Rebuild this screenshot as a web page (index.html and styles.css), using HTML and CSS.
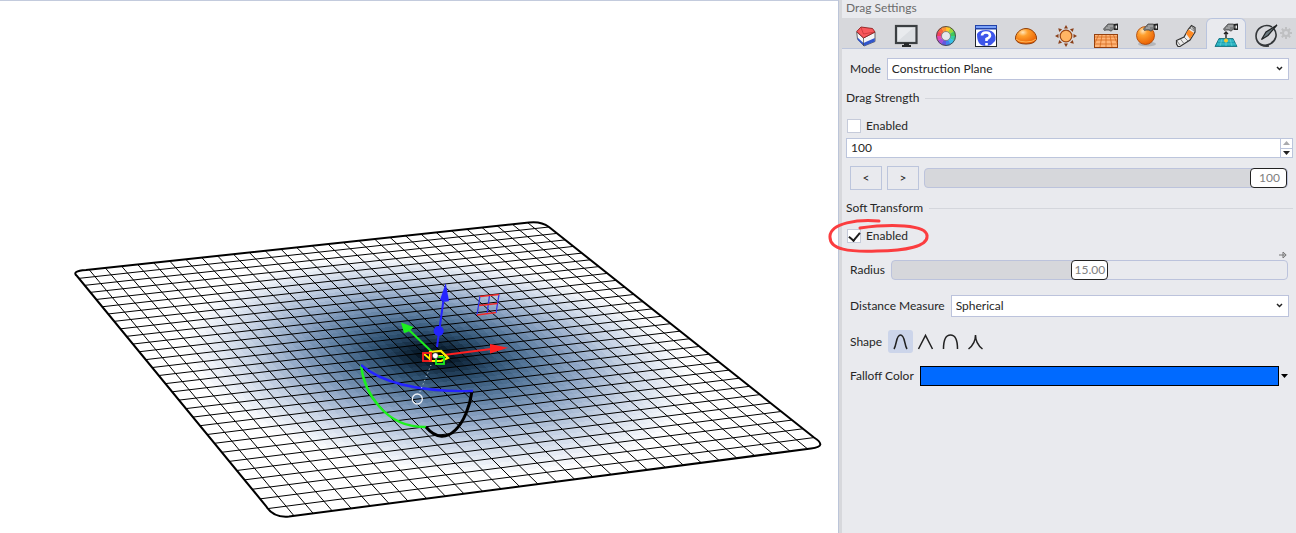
FILE: index.html
```html
<!DOCTYPE html>
<html lang="en">
<head>
<meta charset="utf-8">
<title>Drag Settings</title>
<link rel="stylesheet" href="styles.css">
</head>
<body>
<svg class="symbols" aria-hidden="true">
  <symbol id="hand" viewBox="0 0 15 9">
    <path d="M.5 6 5 1h5l1 .5v4L8 8.200 6 7H3L1.500 7.500z" fill="#7f8183" stroke="#4a4a4a" stroke-width=".8"/>
    <path d="M5 3h5M3 5h4" stroke="#bbb" fill="none"/>
    <path d="M10.500 1 15 .500V7H10.500L11.500 4z" fill="#222"/><path d="M12.500 2.500h1.500v3h-1.500z" fill="#e9e9e9"/>
  </symbol>
</svg>
<main class="app">
  <section class="viewport" aria-label="Perspective view">
    <svg class="scene" viewBox="0 0 838 533">
      <defs>
        <clipPath id="plane-clip"><path d="M86 270 529 222.500Q541 221 549 227L814 437.500Q828 446.500 811 448.500L289 516.500Q273 518 266 506L77 276Q71 271 86 270Z"/></clipPath>
      </defs>
      <g clip-path="url(#plane-clip)">
        <g id="cells" shape-rendering="crispEdges"></g>
        <path id="wires" class="wires"/>
      </g>
      <path class="outline" d="M86 270 529 222.500Q541 221 549 227L814 437.500Q828 446.500 811 448.500L289 516.500Q273 518 266 506L77 276Q71 271 86 270Z"/>
      <g fill="none" stroke-width="2.400">
        <path d="M361 365C364 392 385 428 426 427" stroke="#1df01d"/>
        <path d="M472 391C468 422 447 452 426 427" stroke="#000" stroke-width="3"/>
        <path d="M361 365C382 383 420 392 473 391" stroke="#2424ff"/>
      </g>
      <path d="M431 365 419 394" stroke="#dfe6ef" stroke-dasharray="1 3"/>
      <circle cx="417.300" cy="399" r="5" fill="none" stroke="#eef2f8" stroke-width="1.300"/>
      <g fill="none">
        <path d="M480 296 477 315M489.500 295.500 487 314M499 294.500 496 313" stroke="#3434e8" stroke-width="1.300"/>
        <path d="M480 296.500 499 294.500M479 305.500 497.500 303.500M477 315 496 312.500" stroke="#f02a2a" stroke-width="1.300"/>
      </g>
      <path d="M437 347 443.500 300" stroke="#2424ff" stroke-width="2"/>
      <path d="M445.700 283 440 300Q444 303 449 301Z" fill="#2424ff"/><circle cx="438.700" cy="331" r="5" fill="#2424ff"/>
      <path d="M432 352 408 329" stroke="#1df01d" stroke-width="2"/>
      <path d="M401 322.500 404 333Q410 332 413.500 327Z" fill="#1df01d"/>
      <path d="M444 355 491 349" stroke="#ff2020" stroke-width="2"/>
      <path d="M508 347.700 490 344V353.500Z" fill="#ff2020"/>
      <path d="M430 352 441 351 448 358 441 361H430Z" fill="#050505" stroke="#ffee00" stroke-width="2.200"/>
      <path d="M424 354 430 359M437 356H443" stroke="#ffee00" stroke-width="2"/>
      <rect x="423" y="353" width="8" height="8" fill="none" stroke="#ff2020" stroke-width="1.800"/>
      <rect x="436" y="357" width="8" height="7" fill="none" stroke="#1df01d" stroke-width="1.800"/>
      <circle cx="435.300" cy="355.700" r="3" fill="#fff" stroke="#111" stroke-width=".6"/>
    </svg>
  </section>

  <aside class="panel">
    <h1 class="title">Drag Settings</h1>
    <nav class="tabs" aria-label="Panels">
      <button class="tab" aria-label="Layers"><svg viewBox="0 0 40 30"><path d="M10.700 13 17.500 19 29 13V22.500L18 27 11.500 20Z" fill="#f4f4f6" stroke="#444" stroke-width=".8"/><path d="M11.500 18.500 17.500 24 28.800 19V22.500L18 27 11.800 21Z" fill="#3156cc"/><path d="M10.700 12.500 15 8 26.500 9.500 29 13 17.500 19Z" fill="#f9585c" stroke="#8d1f1f" stroke-width=".9"/><path d="M15 8.500 17.500 15 28.500 13" fill="none" stroke="#b52a2c" stroke-width=".6"/><path d="M17.500 19V27" stroke="#444" stroke-width=".7"/></svg></button>
      <button class="tab" aria-label="Display"><svg viewBox="0 0 40 30"><rect x="10" y="7" width="20.500" height="17" fill="#dcdfe3" stroke="#3b3f42" stroke-width="2.200"/><path d="M12 22 27 9H12Z" fill="#e9ebee"/><path d="M18 24h5v2h2v2h-9v-2h2z" fill="#26292b"/></svg></button>
      <button class="tab" aria-label="Materials"><svg viewBox="0 0 40 30"><g id="wheel" fill="none" stroke-width="5.500"></g><circle cx="20" cy="17" r="9.500" fill="none" stroke="#444" stroke-width=".9"/><circle cx="20" cy="17" r="4.500" fill="#e6e8eb" stroke="#666" stroke-width=".7"/></svg></button>
      <button class="tab" aria-label="Help"><svg viewBox="0 0 40 30"><rect x="9.500" y="6.500" width="21" height="21" fill="#fff" stroke="#20252c"/><rect x="9" y="6" width="22" height="4.500" fill="#2343a8"/><rect x="10" y="7" width="20" height="2" fill="#7ba2f7"/><path d="M11 15Q13 11 20 11t9 5-2 8q-2 3-7 3t-7-3-2-9z" fill="#3d55ea"/><path d="M16 16.500Q16 13.500 20 13.500T24 16.500Q24 18.500 20.500 20V22M20.500 24V26.500" fill="none" stroke="#fff" stroke-width="2.600"/></svg></button>
      <button class="tab" aria-label="Rendering"><svg viewBox="0 0 40 30"><defs><radialGradient id="orange" cx=".35" cy=".25" r=".8"><stop offset="0" stop-color="#ffe5ba"/><stop offset=".3" stop-color="#ffa12f"/><stop offset="1" stop-color="#e85c00"/></radialGradient></defs><path d="M9.500 20C9 15 14 9.500 20 9.500S31 15 30.500 20Q29 25 20 25T9.500 20Z" fill="url(#orange)" stroke="#91400b"/><path d="M10 20Q13 23 20 23T30 20" fill="none" stroke="#ffb557"/></svg></button>
      <button class="tab" aria-label="Sun"><svg viewBox="0 0 40 30"><g fill="#8a3f18"><path id="ray" d="M18 9.500 20 6l2 3.500z"/><use href="#ray" transform="rotate(45 20 17)"/><use href="#ray" transform="rotate(90 20 17)"/><use href="#ray" transform="rotate(135 20 17)"/><use href="#ray" transform="rotate(180 20 17)"/><use href="#ray" transform="rotate(225 20 17)"/><use href="#ray" transform="rotate(270 20 17)"/><use href="#ray" transform="rotate(315 20 17)"/></g><circle cx="20" cy="17" r="5.800" fill="#ffb564" stroke="#9b4715" stroke-width="1.200"/></svg></button>
      <button class="tab" aria-label="Ground plane"><svg viewBox="0 0 40 30"><rect x="8.500" y="15.500" width="23" height="13" fill="#ffb477" stroke="#94400f"/><path d="M9 18h22M9 21h22M9 25h22M20 16v12M16 16 14 28M24 16l2 12M12.500 16 9 24M27.500 16 31 24" stroke="#d4691f" stroke-width=".8"/><use href="#hand" x="17" y="4" width="15" height="9"/></svg></button>
      <button class="tab" aria-label="Texture mapping"><svg viewBox="0 0 40 30"><ellipse cx="21" cy="25" rx="9" ry="2.500" fill="#b4b6ba"/><circle cx="19.500" cy="16.500" r="9" fill="url(#orange)" stroke="#a84305" stroke-width=".8"/><use href="#hand" x="17" y="4" width="15" height="9"/></svg></button>
      <button class="tab" aria-label="Libraries"><svg viewBox="0 0 40 30"><path d="M10.500 21.500 18 18 22.500 10 25.500 6.500 29 8.500V13L24 21 14 27.500H12L10.500 25Z" fill="#ececec" stroke="#333" stroke-width="1.200"/><path d="M20 14.500 22.500 10.500 28 14 24 20Z" fill="#ff8a24"/><path d="M24 9 28 12M18 18l4 4M14.500 20l3 4M11 22l3 4" stroke="#666" stroke-width=".8"/><path d="M25 7.500 28.500 9v3z" fill="#777"/></svg></button>
      <button class="tab tab-active" aria-label="Drag settings" aria-current="page"><svg viewBox="0 0 40 30"><path d="M13 19.500H27L31 27.500H9Z" fill="#1ba5b5" stroke="#0c6977" stroke-width=".8"/><path d="M12 22h16M11 25h19M16 20 14 27M20 20v7M24 20l2 7" stroke="#61d6dc" stroke-width=".7"/><circle cx="20" cy="21.500" r="2" fill="#f7c72c"/><path d="M20 19V14M18 15l2-2 2 2" fill="none" stroke="#222" stroke-width="1.400"/><use href="#hand" x="17" y="4" width="15" height="9"/></svg></button>
      <button class="tab" aria-label="Annotate"><svg viewBox="0 0 40 30"><path d="M26 8C19 4 10 9 10 17s8 11 14 8 8-10 4-15M11 22q4 6 12 5" fill="none" stroke="#34373a" stroke-width="1.600"/><path d="M31 6 20 13 15.500 20.500 22 16.500Z" fill="#6c7a80" stroke="#202325" stroke-width="1.200"/></svg></button>
      <button class="gear" aria-label="Panel options"><svg viewBox="0 0 12 12"><circle cx="6" cy="6" r="3" fill="none" stroke="#bfc0c2" stroke-width="2"/><path d="M6 0v2.500M6 9.500V12M0 6h2.500M9.500 6H12M1.800 1.800l1.700 1.700M8.500 8.500l1.700 1.700M10.200 1.800 8.500 3.500M3.500 8.500l-1.700 1.700" stroke="#bfc0c2" stroke-width="2"/></svg></button>
    </nav>

    <form class="settings">
      <div class="row select-row">
        <label for="mode">Mode</label>
        <span class="select"><select id="mode"><option>Construction Plane</option></select><svg viewBox="0 0 7 5"><path d="M1 1 3.500 3.500 6 1" fill="none" stroke="#222" stroke-width="1.500"/></svg></span>
      </div>

      <h2 class="group">Drag Strength</h2>
      <label class="check"><input type="checkbox">Enabled</label>
      <div class="spin">
        <input type="text" inputmode="numeric" value="100" aria-label="Drag strength">
        <span class="steps">
          <button type="button" aria-label="Increase"><svg viewBox="0 0 7 4"><path d="M0 4 3.500 0 7 4z" fill="#a9aaad"/></svg></button>
          <button type="button" aria-label="Decrease"><svg viewBox="0 0 7 4"><path d="M0 0 3.500 4 7 0z" fill="#222"/></svg></button>
        </span>
      </div>
      <div class="row strength-row">
        <button type="button" class="step">&lt;</button>
        <button type="button" class="step">&gt;</button>
        <span class="slider"><input class="full" type="range" min="0" max="100" value="100" aria-label="Drag strength slider"><output class="at-end">100</output></span>
      </div>

      <h2 class="group">Soft Transform</h2>
      <div class="marked">
        <label class="check"><input type="checkbox" checked>Enabled</label>
        <svg class="marker" viewBox="0 0 102 36" aria-hidden="true"><path d="M51 3C30 1 3 5 2 18 1 32 22 34 49 33 78 33 100 28 99 18 99 6 61 6 32 10" fill="none" stroke="#fb3d3f" stroke-width="3" stroke-linecap="round"/></svg>
      </div>
      <div class="pin-row"><svg class="pin" viewBox="0 0 8 8"><path d="M0 4H7M4 1v6L7.200 4Z" fill="none" stroke="#777"/></svg></div>
      <div class="row radius-row">
        <label for="radius">Radius</label>
        <span class="slider"><input class="half" id="radius" type="range" min="0" max="30" value="15"><output class="at-middle">15.00</output></span>
      </div>
      <div class="row select-row distance-row">
        <label for="distance">Distance Measure</label>
        <span class="select"><select id="distance"><option>Spherical</option></select><svg viewBox="0 0 7 5"><path d="M1 1 3.500 3.500 6 1" fill="none" stroke="#222" stroke-width="1.500"/></svg></span>
      </div>
      <div class="row shape-row">
        <span>Shape</span>
        <span class="shapes">
          <button type="button" class="shape shape-on" aria-label="Smooth"><svg viewBox="0 0 25 23"><path d="M6 19C9 14 8 5 12.500 5S16 14 19 19"/></svg></button>
          <button type="button" class="shape" aria-label="Linear"><svg viewBox="0 0 25 23"><path d="M5.500 19 12.500 5.500 19.500 19"/></svg></button>
          <button type="button" class="shape" aria-label="Round"><svg viewBox="0 0 25 23"><path d="M5.500 19C5.500 11 7 5 12.500 5S19.500 11 19.500 19"/></svg></button>
          <button type="button" class="shape" aria-label="Sharp"><svg viewBox="0 0 25 23"><path d="M5.500 19C10 15.500 12.500 12 12.500 5 12.500 12 15 15.500 19.500 19"/></svg></button>
        </span>
      </div>
      <div class="row color-row">
        <span>Falloff Color</span>
        <button type="button" class="color" aria-label="Falloff color"></button>
        <button type="button" class="color-menu" aria-label="Choose falloff color"><svg viewBox="0 0 7 4"><path d="M0 0 3.500 4 7 0z" fill="#000"/></svg></button>
      </div>
    </form>
  </aside>
</main>
<script src="scene.js"></script>
</body>
</html>
```

FILE: styles.css
```css
* { box-sizing: border-box; }
body { margin: 0; font: 12px/16px Lato, "Noto Sans", sans-serif; color: #262626; background: #fff; }
button { padding: 0; border: 0; background: none; font: inherit; color: inherit; }
svg { display: block; }
.symbols { position: absolute; width: 0; height: 0; }
.app { display: flex; min-height: 100vh; }
.viewport { flex: 1; min-width: 0; background: #fff; box-shadow: inset 0 1px #c3cbdd; }
.scene { width: 100%; height: auto; }
.wires { fill: none; stroke: #000; stroke-width: 1; }
.outline { fill: none; stroke: #000; stroke-width: 2; }

.panel { flex: none; width: 458px; border-left: 1px solid #bcc5d9; box-shadow: inset 3px 0 #d7d8dc; padding-left: 3px; background: #e9eaee; }
.title { margin: 0; padding: 0 4px 2px; font-size: 12px; font-weight: 400; line-height: 16px; color: #6b6b6b; }
.tabs { position: relative; display: flex; height: 31px; padding-left: 4px; background: #d7d8dc; box-shadow: inset 0 -1px #bcc5dc; }
.tab { width: 40px; height: 31px; }
.tab svg { width: 40px; height: 30px; }
.tab-active { border: 1px solid #b9c4de; border-bottom: 0; border-radius: 6px 6px 0 0; background: #e9eaee; }
.tab-active svg { margin: -1px; }
.gear { position: absolute; right: 4px; top: 9px; width: 12px; }

.settings { display: flex; flex-direction: column; padding: 9px 3px 0 4px; }
.row { display: flex; align-items: center; padding: 0 5px 0 4px; }
.select-row { gap: 6px; padding-right: 4px; }
.select { position: relative; flex: 1; }
.select select { display: block; width: 100%; height: 22px; padding: 0 4px; appearance: none; border: 1px solid #bcc3dc; border-radius: 0; background: #fff; font: inherit; color: inherit; }
.select svg { position: absolute; right: 6px; top: 8px; width: 7px; pointer-events: none; }
.group { display: flex; align-items: center; gap: 6px; margin: 10px 0; font-size: 12px; font-weight: 400; line-height: 16px; }
.group::after { content: ""; flex: 1; height: 1px; background: #d4d6dc; }
.check { display: flex; align-items: center; gap: 5px; width: max-content; margin-left: 1px; height: 20px; }
.check input { width: 14px; height: 14px; margin: 0; appearance: none; border: 1px solid #c6cbda; background: #fff; }
.check input:checked { position: relative; }
.check input:checked::after { content: ""; position: absolute; left: 3px; top: 0; width: 5px; height: 9px; border: solid #1d1d1d; border-width: 0 2px 2px 0; transform: rotate(40deg); }
.spin { display: flex; height: 20px; margin-top: 2px; border: 1px solid #bcc5dc; background: #fff; }
.spin input { flex: 1; min-width: 0; padding: 0 4px; border: 0; background: none; font: inherit; color: inherit; }
.steps { display: flex; flex-direction: column; width: 12px; border-left: 1px solid #bcc5dc; }
.steps button { flex: 1; display: grid; place-items: center; }
.steps button + button { border-top: 1px solid #bcc5dc; }
.steps svg { width: 7px; }
.strength-row { gap: 5px; margin-top: 8px; }
.step { width: 32px; height: 24px; border: 1px solid #bcc5dc; }
.slider { position: relative; flex: 1; height: 20px; }
.slider input { display: block; width: 100%; height: 20px; margin: 0; appearance: none; border: 1px solid #bcc3dc; border-radius: 4px; background: #d6d7db; }
.slider .half { background: linear-gradient(to right, #d6d7db 50%, #e9eaee 50%); }
.slider input::-webkit-slider-thumb { appearance: none; width: 37px; height: 20px; border: 1px solid #222; border-radius: 4px; background: #fff; }
.slider output { position: absolute; top: 2px; width: 37px; text-align: center; color: #808080; pointer-events: none; }
.at-end { right: 0; }
.at-middle { left: 50%; margin-left: -18px; }
.marked { position: relative; }
.marker { position: absolute; left: -18px; top: -8px; width: 102px; height: 36px; pointer-events: none; }
.pin-row { display: flex; justify-content: flex-end; height: 14px; padding: 5px 6px 0 0; }
.pin { width: 8px; height: 8px; }
.radius-row { gap: 6px; }
.distance-row { margin-top: 15px; }
.shape-row { gap: 6px; margin-top: 13px; }
.shapes { display: flex; }
.shape { width: 25px; height: 23px; border-radius: 3px; }
.shape-on { background: #ccd5ea; }
.shape path { fill: none; stroke: #222; stroke-width: 1.5px; }
.color-row { gap: 6px; margin-top: 13px; }
.color { flex: 1; height: 20px; border: 1px solid #000; background: #006aff; }
.color-menu { width: 7px; margin-left: -4px; }
```

FILE: scene.js
```js
// Perspective mapping of the unit square onto the plane's four corners.
const N = 30;
const [A, B, C, D] = [[73, 271.5], [542, 220.5], [825, 446.5], [275, 518.5]];
const sx = A[0] - B[0] + C[0] - D[0], sy = A[1] - B[1] + C[1] - D[1];
const dx1 = B[0] - C[0], dx2 = D[0] - C[0], dy1 = B[1] - C[1], dy2 = D[1] - C[1];
const det = dx1 * dy2 - dx2 * dy1;
const g = (sx * dy2 - dx2 * sy) / det, h = (dx1 * sy - sx * dy1) / det;
const a = B[0] - A[0] + g * B[0], b = D[0] - A[0] + h * D[0];
const d = B[1] - A[1] + g * B[1], e = D[1] - A[1] + h * D[1];
const map = (u, v) => {
  const w = g * u + h * v + 1;
  return ((a * u + b * v + A[0]) / w).toFixed(1) + " " + ((d * u + e * v + A[1]) / w).toFixed(1);
};

let wires = "";
for (let i = 1; i < N; i++) {
  const t = i / N;
  wires += `M${map(t, 0)}L${map(t, 1)}M${map(0, t)}L${map(1, t)}`;
}
document.getElementById("wires").setAttribute("d", wires);

// Falloff shading: distance in grid cells to colour.
const stops = [[0, [0, 4, 10]], [1, [10, 29, 46]], [3, [46, 80, 112]], [5, [88, 121, 156]], [7.5, [144, 167, 198]], [10, [198, 210, 228]], [12, [232, 237, 245]], [13.5, [255, 255, 255]]];
const shade = r => {
  for (let i = 1; i < stops.length; i++) {
    if (r < stops[i][0]) {
      const [r0, c0] = stops[i - 1], [r1, c1] = stops[i], t = (r - r0) / (r1 - r0);
      return `rgb(${c0.map((c, k) => Math.round(c + (c1[k] - c) * t))})`;
    }
  }
  return null;
};
let cells = "";
const M = 60, mid = 30.9;
for (let j = 0; j < M; j++) for (let i = 0; i < M; i++) {
  const fill = shade(Math.hypot(i + 0.5 - mid, j + 0.5 - mid) * N / M);
  if (fill) cells += `<path fill="${fill}" d="M${map(i / M, j / M)}L${map((i + 1) / M, j / M)}L${map((i + 1) / M, (j + 1) / M)}L${map(i / M, (j + 1) / M)}Z"/>`;
}
document.getElementById("cells").innerHTML = cells;

// Colour wheel segments.
const hues = ["#ffc928", "#9bd93c", "#41c85a", "#35cda0", "#37bfe6", "#3f83ec", "#6357df", "#a64fd4", "#e548ae", "#f2415a", "#f7643a", "#ff9433"];
document.getElementById("wheel").innerHTML = hues.map((c, k) => {
  const p = n => (20 + 7 * Math.sin(n * Math.PI / 6)).toFixed(2) + " " + (17 - 7 * Math.cos(n * Math.PI / 6)).toFixed(2);
  return `<path stroke="${c}" d="M${p(k)}A7 7 0 0 1 ${p(k + 1.05)}"/>`;
}).join("");
```
